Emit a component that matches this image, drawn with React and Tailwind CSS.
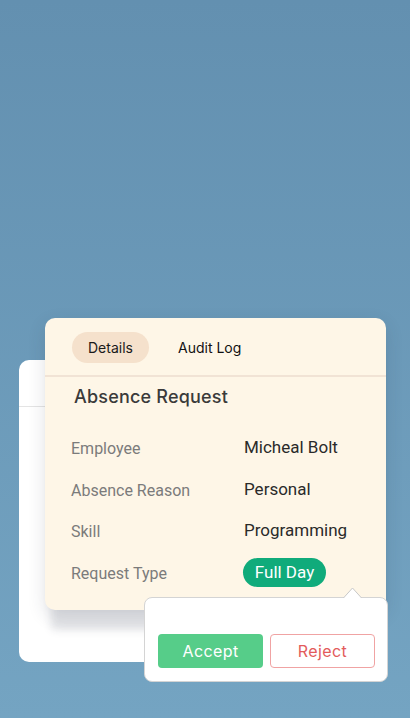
import React from 'react';

const rows = [
  { label: 'Employee', value: 'Micheal Bolt' },
  { label: 'Absence Reason', value: 'Personal' },
  { label: 'Skill', value: 'Programming' },
];

const App = () => {
  return (
    <div className="relative h-[718px] w-full overflow-hidden bg-gradient-to-b from-[#6390b0] to-[#74a4c2]">
      {/* card behind */}
      <div className="ml-[19px] mt-[360px] h-[302px] w-[340px] rounded-[10px] bg-white">
        <div className="h-[47px] border-b border-[#e4e4e4]" />
      </div>

      {/* front card */}
      <div
        className="absolute left-[45px] top-[318px] h-[292px] w-[341px] rounded-[10px] bg-[#fef6e7] shadow-[0_26px_8px_-6px_rgba(40,50,70,0.13),0_6px_18px_rgba(40,50,70,0.14)]"
        style={{ fontFamily: 'Inter, "Noto Sans", sans-serif' }}
      >
        <div className="flex h-[59px] items-center gap-[29px] border-b-2 border-[#f1e3d5] pl-[27px] pt-[1px]">
          <div className="flex h-[31px] w-[77px] items-center justify-center rounded-full bg-[#f5e1cc] text-[14px] text-[#1a1a1a]">
            Details
          </div>
          <div className="text-[14px] text-[#111]">Audit Log</div>
        </div>
        <div className="pl-[29px] pt-[8px] text-[18px] font-medium leading-[24px] tracking-[0.2px] text-[#3a3a3a]">
          Absence Request
        </div>
        <div className="mt-[19px] flex flex-col pl-[26px]" style={{ fontFamily: 'Roboto, "Noto Sans", sans-serif' }}>
          {rows.map((r) => (
            <div key={r.label} className="flex h-[41.7px] items-center">
              <div className="w-[173px] text-[16px] text-[#7b7b7b]">{r.label}</div>
              <div className="-mt-[2px] text-[17px] text-[#2a2a2a]">{r.value}</div>
            </div>
          ))}
          <div className="flex h-[41.7px] items-center">
            <div className="w-[172px] text-[16px] text-[#7b7b7b]">Request Type</div>
            <div className="-mt-[2px] flex h-[29px] w-[83px] items-center justify-center rounded-full bg-[#10ab7b] text-[17px] text-white">
              Full Day
            </div>
          </div>
        </div>
      </div>

      {/* popover */}
      <div className="absolute left-[144px] top-[597px] h-[85px] w-[244px] rounded-[8px] border border-[#d4d4d4] bg-white">
        <svg className="absolute -top-[11px] left-[198px]" width="19" height="12" viewBox="0 0 19 12">
          <path d="M0 11.5 L9.5 1 L19 11.5" fill="white" stroke="#c8c8c8" strokeWidth="1" />
          <rect x="0" y="11" width="19" height="2" fill="white" />
        </svg>
        <div className="mt-[36px] flex gap-[7px] pl-[13px]" style={{ fontFamily: 'Inter, "Noto Sans", sans-serif' }}>
          <button className="flex h-[34px] w-[105px] items-center justify-center rounded-[4px] bg-[#56cd89] text-[16px] tracking-[0.4px] text-white">
            Accept
          </button>
          <button className="flex h-[34px] w-[105px] items-center justify-center rounded-[4px] border border-[#f0a3a3] bg-white text-[16px] tracking-[0.4px] text-[#e35b5b]">
            Reject
          </button>
        </div>
      </div>
    </div>
  );
};

export default App;
